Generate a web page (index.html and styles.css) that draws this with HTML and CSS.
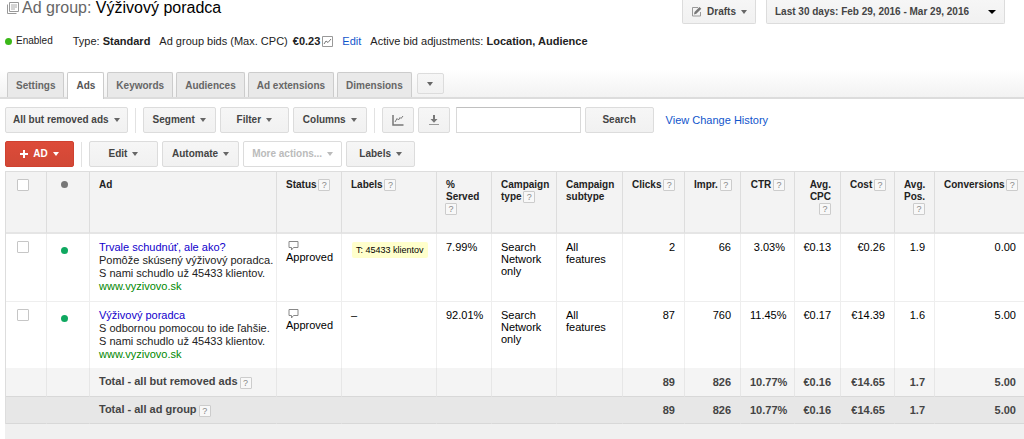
FILE: index.html
```html
<!DOCTYPE html>
<html lang="en">
<head>
<meta charset="utf-8">
<title>Ad group: Výživový poradca</title>
<link rel="stylesheet" href="styles.css">
</head>
<body>
<header class="header">
  <h1 class="title">
    <svg class="title-icon" viewBox="0 0 13 13" width="13" height="13" fill="none" stroke="#999"><path d="M3.500.5h9v9h-9zM1.500 2.500v9h9"/><path d="M5 3h6M5 5h6M5 7h4" stroke="#aaa"/></svg>
    <span><span class="title-kind">Ad group:</span> Výživový poradca</span>
  </h1>
  <div class="header-actions">
    <button class="btn btn-top" type="button">
      <svg viewBox="0 0 11 11" width="11" height="11"><path d="M7 1.500H1.500v8.500h8V6" fill="none" stroke="#999"/><path d="M3 8.500l.5-2.500L8.500 1l1.800 1.800-5 5z" fill="#777"/></svg>
      Drafts <span class="caret"></span>
    </button>
    <button class="btn btn-top btn-date" type="button">Last 30 days: Feb 29, 2016 - Mar 29, 2016 <span class="caret caret-dark"></span></button>
  </div>
</header>

<div class="info">
  <span class="state"><i class="dot dot-lime"></i>Enabled</span>
  <span>Type: <b>Standard</b></span>
  <span class="bids">Ad group bids (Max. CPC) <b>€0.23</b><svg viewBox="0 0 11 11" width="11" height="11" fill="none"><path d="M.5.5h10v10H.5z" stroke="#999"/><path d="M2 8l2-3 2 1.500L9 3" stroke="#777"/></svg></span>
  <a class="link" href="#">Edit</a>
  <span>Active bid adjustments: <b>Location, Audience</b></span>
</div>

<nav class="tabs">
  <a class="tab" href="#">Settings</a>
  <a class="tab tab-active" href="#">Ads</a>
  <a class="tab" href="#">Keywords</a>
  <a class="tab" href="#">Audiences</a>
  <a class="tab" href="#">Ad extensions</a>
  <a class="tab" href="#">Dimensions</a>
  <button class="btn tab-more" type="button" aria-label="More tabs"><span class="caret"></span></button>
</nav>

<main class="main">
  <div class="toolbar">
    <button class="btn btn-wide" type="button">All but removed ads <span class="caret"></span></button>
    <span class="sep"></span>
    <button class="btn" type="button">Segment <span class="caret"></span></button>
    <button class="btn" type="button">Filter <span class="caret"></span></button>
    <button class="btn" type="button">Columns <span class="caret"></span></button>
    <span class="sep"></span>
    <button class="btn btn-icon" type="button" aria-label="Chart"><svg viewBox="0 0 12 12" width="12" height="12" fill="none" stroke="#777"><path d="M1 1v10h10.500" stroke-width="1.500"/><path d="M3 8l2-3.500 1.500 1.500L8 3.500l1 1L11 2"/></svg></button>
    <button class="btn btn-icon" type="button" aria-label="Download"><svg viewBox="0 0 12 12" width="12" height="12"><path d="M5 1h2v4h2.500L6 8.800 2.500 5H5z" fill="#777"/><path d="M1 10.500h10" stroke="#999"/></svg></button>
    <input class="search" type="text" aria-label="Search ads">
    <button class="btn" type="button">Search</button>
    <a class="link history" href="#">View Change History</a>
  </div>
  <div class="toolbar">
    <button class="btn btn-red" type="button"><svg viewBox="0 0 8 8" width="8" height="8"><path d="M4 0v8M0 4h8" stroke="#fff" stroke-width="2"/></svg> AD <span class="caret"></span></button>
    <span class="sep"></span>
    <button class="btn" type="button">Edit <span class="caret"></span></button>
    <button class="btn" type="button">Automate <span class="caret"></span></button>
    <button class="btn btn-off" type="button" disabled>More actions... <span class="caret"></span></button>
    <button class="btn" type="button">Labels <span class="caret"></span></button>
  </div>

  <table class="ads">
    <colgroup>
      <col class="c-check"><col class="c-dot"><col class="c-ad"><col class="c-status"><col class="c-labels"><col class="c-served"><col class="c-type"><col class="c-sub"><col class="c-clicks"><col class="c-impr"><col class="c-ctr"><col class="c-cpc"><col class="c-cost"><col class="c-pos"><col class="c-conv">
    </colgroup>
    <thead>
      <tr>
        <th><input class="check" type="checkbox" aria-label="Select all ads"></th>
        <th class="mid"><i class="dot dot-grey"></i></th>
        <th>Ad</th>
        <th>Status <button class="help" type="button">?</button></th>
        <th>Labels <button class="help" type="button">?</button></th>
        <th>%<br>Served<br><button class="help" type="button">?</button></th>
        <th>Campaign<br>type <button class="help" type="button">?</button></th>
        <th>Campaign<br>subtype</th>
        <th class="num">Clicks <button class="help" type="button">?</button></th>
        <th class="num">Impr. <button class="help" type="button">?</button></th>
        <th class="num">CTR <button class="help" type="button">?</button></th>
        <th class="num">Avg.<br>CPC<br><button class="help" type="button">?</button></th>
        <th class="num">Cost <button class="help" type="button">?</button></th>
        <th class="num">Avg.<br>Pos.<br><button class="help" type="button">?</button></th>
        <th class="num">Conversions <button class="help" type="button">?</button></th>
      </tr>
    </thead>
    <tbody>
      <tr>
        <td><input class="check" type="checkbox" aria-label="Select Trvale schudnúť"></td>
        <td class="mid"><i class="dot dot-green"></i></td>
        <td class="ad"><a class="ad-title" href="#">Trvale schudnúť, ale ako?</a><br>Pomôže skúsený výživový poradca.<br>S nami schudlo už 45433 klientov.<br><span class="ad-url">www.vyzivovo.sk</span></td>
        <td class="status"><svg viewBox="0 0 11 10" width="11" height="10" fill="#fff" stroke="#888"><path d="M1 .5h9v6H5.500L3.500 9V6.500H1z"/></svg>Approved</td>
        <td><span class="tag">T: 45433 klientov</span></td>
        <td>7.99%</td>
        <td>Search Network only</td>
        <td>All features</td>
        <td class="num">2</td>
        <td class="num">66</td>
        <td class="num">3.03%</td>
        <td class="num">€0.13</td>
        <td class="num">€0.26</td>
        <td class="num">1.9</td>
        <td class="num">0.00</td>
      </tr>
      <tr>
        <td><input class="check" type="checkbox" aria-label="Select Výživový poradca"></td>
        <td class="mid"><i class="dot dot-green"></i></td>
        <td class="ad"><a class="ad-title" href="#">Výživový poradca</a><br>S odbornou pomocou to ide ľahšie.<br>S nami schudlo už 45433 klientov.<br><span class="ad-url">www.vyzivovo.sk</span></td>
        <td class="status"><svg viewBox="0 0 11 10" width="11" height="10" fill="#fff" stroke="#888"><path d="M1 .5h9v6H5.500L3.500 9V6.500H1z"/></svg>Approved</td>
        <td>–</td>
        <td>92.01%</td>
        <td>Search Network only</td>
        <td>All features</td>
        <td class="num">87</td>
        <td class="num">760</td>
        <td class="num">11.45%</td>
        <td class="num">€0.17</td>
        <td class="num">€14.39</td>
        <td class="num">1.6</td>
        <td class="num">5.00</td>
      </tr>
    </tbody>
    <tfoot>
      <tr>
        <td></td><td></td>
        <td>Total - all but removed ads <button class="help" type="button">?</button></td>
        <td></td><td></td><td></td><td></td><td></td>
        <td class="num">89</td>
        <td class="num">826</td>
        <td class="num">10.77%</td>
        <td class="num">€0.16</td>
        <td class="num">€14.65</td>
        <td class="num">1.7</td>
        <td class="num">5.00</td>
      </tr>
      <tr class="grand">
        <td></td><td></td>
        <td>Total - all ad group <button class="help" type="button">?</button></td>
        <td></td><td></td><td></td><td></td><td></td>
        <td class="num">89</td>
        <td class="num">826</td>
        <td class="num">10.77%</td>
        <td class="num">€0.16</td>
        <td class="num">€14.65</td>
        <td class="num">1.7</td>
        <td class="num">5.00</td>
      </tr>
    </tfoot>
  </table>
  <div class="below"></div>
</main>
</body>
</html>
```

FILE: styles.css
```css
* { box-sizing: border-box; }

body {
  margin: 0;
  min-height: 100vh;
  display: flex;
  flex-direction: column;
  background: #fff;
  color: #222;
  font: 11px/12px "Liberation Sans", Arial, sans-serif;
}

a { text-decoration: none; }
button, input { font: inherit; margin: 0; }
svg { flex: none; }

/* Header */
.header {
  display: flex;
  justify-content: space-between;
  align-items: flex-start;
  height: 24px;
  padding: 0 19px 0 6px;
}

.title {
  display: flex;
  align-items: center;
  gap: 3px;
  margin: 0;
  color: #000;
  font-size: 16px;
  font-weight: normal;
  line-height: 16px;
}

.title-kind { color: #666; }
.header-actions { display: flex; gap: 10px; }

/* Buttons */
.btn {
  display: inline-flex;
  align-items: center;
  justify-content: center;
  gap: 5px;
  min-width: 69px;
  height: 26px;
  padding: 0 9px;
  border: 1px solid #dcdcdc;
  border-radius: 2px;
  background: linear-gradient(#f6f6f6, #f1f1f1);
  color: #444;
  font-size: 10px;
  font-weight: bold;
  white-space: nowrap;
}

.btn-top {
  min-width: 73px;
  height: 24px;
  padding: 0 8px;
  border-top: 0;
  border-radius: 0 0 2px 2px;
}

.btn-date { justify-content: space-between; min-width: 239px; }
.btn-wide { padding: 0 7px; }
.btn-icon { min-width: 32px; padding: 0; }

.btn-red {
  border-color: #cf4130;
  background: linear-gradient(#dd4b39, #d14836);
  color: #fff;
}

.btn-off { padding: 0 8px; background: #fff; color: #bbb; }

.caret {
  border: 3px solid transparent;
  border-top: 4px solid #666;
  border-bottom: 0;
}

.caret-dark { border-top-color: #000; border-left-width: 4px; border-right-width: 4px; }
.btn-red .caret { border-top-color: #fff; }
.btn-off .caret { border-top-color: #bbb; }

/* Ad group summary */
.info {
  display: flex;
  align-items: center;
  gap: 9px;
  height: 34px;
  padding-left: 5px;
}

.state { display: flex; align-items: center; gap: 4px; margin-right: 11px; font-size: 10px; }
.bids { display: flex; align-items: center; gap: 2px; white-space: pre; }
.link { color: #15c; }

.dot { display: inline-block; width: 7px; height: 7px; border-radius: 50%; }
.dot-lime { background: #3bb818; }
.dot-grey { background: #777; }
.dot-green { background: #0fa860; }

/* Tabs */
.tabs {
  display: flex;
  align-items: flex-end;
  gap: 3px;
  height: 41px;
  padding-left: 7px;
  border-bottom: 2px solid #dcdcdc;
  background: linear-gradient(#fff 30%, #f2f2f2);
}

.tab {
  height: 25px;
  padding: 0 8px;
  border: 1px solid #ccc;
  border-bottom: 0;
  border-radius: 2px 2px 0 0;
  background: #e9e9e9;
  color: #666;
  font-size: 10px;
  font-weight: bold;
  line-height: 26px;
}

.tab-active { height: 27px; margin-bottom: -2px; background: #fff; color: #555; }
.tab-more { min-width: 27px; height: 21px; margin: 0 0 3px 2px; padding: 0; }

/* Toolbars */
.main { display: flex; flex: 1; flex-direction: column; padding-left: 5px; }
.toolbar { display: flex; align-items: center; gap: 4px; margin-top: 8px; }
.sep { width: 1px; height: 25px; margin: 0 3px; background: #e2e2e2; }
.search { width: 125px; height: 26px; margin-left: 2px; border: 1px solid #d9d9d9; border-top-color: #c0c0c0; }
.history { margin-left: 8px; }

/* Table */
.ads {
  width: 100%;
  margin-top: 4px;
  border-collapse: separate;
  border-spacing: 0;
  border-left: 1px solid #ddd;
  table-layout: fixed;
}

.c-check { width: 41px; }
.c-dot { width: 43px; }
.c-ad { width: 187px; }
.c-status { width: 65px; }
.c-labels { width: 95px; }
.c-served { width: 55px; }
.c-type { width: 65px; }
.c-sub { width: 66px; }
.c-clicks { width: 62px; }
.c-impr { width: 56px; }
.c-ctr { width: 54px; }
.c-cpc { width: 46px; }
.c-cost { width: 54px; }
.c-pos { width: 40px; }

.ads th, .ads td {
  padding: 7px 9px;
  border-right: 1px solid #eee;
  text-align: left;
  vertical-align: top;
}

.ads th {
  height: 63px;
  border-color: #ddd;
  border-top: 1px solid #ddd;
  border-bottom: 2px solid #e5e5e5;
  background: #f3f3f3;
  font-size: 10px;
  white-space: nowrap;
}

.ads td { height: 67px; color: #000; }
.ads tbody tr + tr td { border-top: 1px solid #eee; }
.ads tr > :last-child { border-right: 0; padding-right: 8px; }
.ads tr > :nth-child(12) { padding-left: 4px; }
.ads tr > :first-child { padding-left: 11px; }
.ads .num { text-align: right; }
.ads .mid { padding-left: 0; padding-right: 7px; text-align: center; }
.ads td.mid { padding-top: 10px; }
.ads .ad { color: #222; line-height: 13px; white-space: nowrap; }
.ads .ad-title { color: #10c; }
.ad-url { color: #080; }
.status svg { display: block; margin-left: 2px; }

.check {
  display: block;
  appearance: none;
  width: 12px;
  height: 12px;
  border: 1px solid #c6c6c6;
  border-radius: 1px;
  background: #fff;
}

.help {
  width: 12px;
  height: 12px;
  margin-left: -1px;
  padding: 0;
  border: 1px solid #ccc;
  border-radius: 1px;
  background: #f8f8f8;
  color: #888;
  font-size: 9px;
  font-weight: normal;
  line-height: 10px;
  vertical-align: middle;
}

.tag {
  display: inline-block;
  margin: 1px 0 0 1px;
  padding: 2px 4px;
  border-radius: 2px;
  background: #ffc;
  font-size: 9px;
  white-space: nowrap;
}

.ads tfoot td {
  height: 28px;
  padding-top: 0;
  padding-bottom: 0;
  border-color: #e6e6e6;
  background: #f4f4f4;
  color: #444;
  font-weight: bold;
  white-space: nowrap;
  vertical-align: middle;
}

.ads tfoot .grand td {
  border-top: 1px solid #d8d8d8;
  border-bottom: 1px solid #d8d8d8;
  border-right-color: #e7e7e7;
  background: #e7e7e7;
}

.below { flex: 1; background: #f0f0f0; }
```
